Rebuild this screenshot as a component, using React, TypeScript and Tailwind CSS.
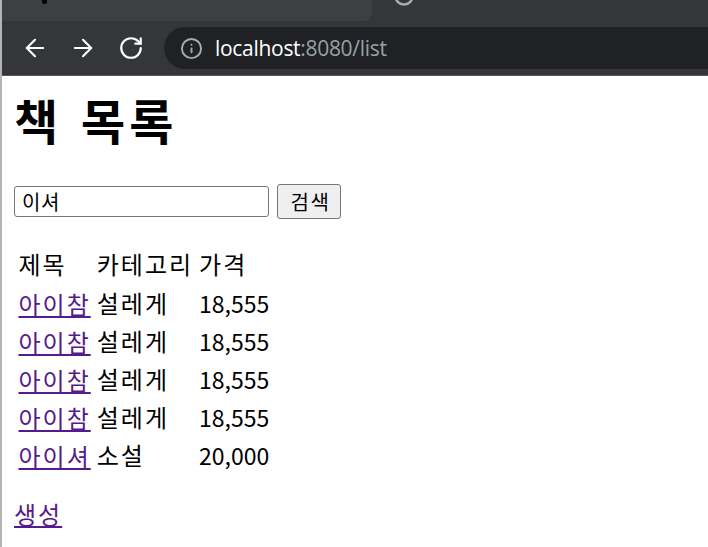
import { ArrowLeft, ArrowRight, Info, RotateCw } from "lucide-react";

const books = [
  { title: "아이참", category: "설레게", price: "18,555" },
  { title: "아이참", category: "설레게", price: "18,555" },
  { title: "아이참", category: "설레게", price: "18,555" },
  { title: "아이참", category: "설레게", price: "18,555" },
  { title: "아이셔", category: "소설", price: "20,000" },
];

function BrowserBar() {
  return (
    <div className="h-[76px] bg-[#35363a] border-b border-[#55565a] flex flex-col shrink-0">
      {/* Tab strip, cut off at the top */}
      <div className="h-[21px] flex items-start">
        <div className="w-[370px] h-[21px] bg-[#3c4043] rounded-br-lg pl-[40px]">
          <div className="w-[5px] h-[4px] bg-black rounded-b-full" />
        </div>
        <svg className="ml-[21px]" width="22" height="8" viewBox="0 0 22 8" fill="none">
          <circle cx="11" cy="-4" r="8.5" stroke="#a9abae" strokeWidth="2.5" />
        </svg>
      </div>
      {/* Toolbar */}
      <div className="flex-1 flex items-center pl-[9px]">
        <div className="w-12 flex justify-center">
          <ArrowLeft className="w-[28px] h-[28px] text-white" strokeWidth={1.8} />
        </div>
        <div className="w-12 flex justify-center">
          <ArrowRight className="w-[28px] h-[28px] text-white" strokeWidth={1.8} />
        </div>
        <div className="w-12 flex justify-center">
          <RotateCw className="w-[26px] h-[26px] text-white" strokeWidth={2} />
        </div>
        <div className="ml-[9px] flex-1 h-[42px] bg-[#202124] rounded-l-full flex items-center pl-[16px]">
          <Info className="w-[23px] h-[23px] text-[#a9abae]" strokeWidth={2} />
          <div className="ml-[12px] mt-[2px] text-[21px] font-['Open_Sans',sans-serif] tracking-[-0.3px]">
            <span className="text-white">localhost</span>
            <span className="text-[#9aa0a6]">:8080/list</span>
          </div>
        </div>
      </div>
    </div>
  );
}

export default function App() {
  return (
    <div className="h-[547px] w-[708px] overflow-hidden border-l-2 border-[#b4b4b0] bg-white flex flex-col">
      <BrowserBar />
      <div className="flex-1 pl-3 text-black text-[24px] tracking-[2px] font-['Noto_Sans_CJK_KR','Noto_Sans',sans-serif]">
        <h1 className="text-[48px] leading-[60px] font-bold mt-[13px] tracking-[4px] [word-spacing:4px]">책 목록</h1>

        <form className="flex items-center mt-[35px]">
          <input
            defaultValue="이셔"
            className="w-[255px] h-[31px] border border-[#767676] rounded-[3px] pl-[7px] pr-[5px] text-[20px] tracking-[0.5px] outline-none"
          />
          <button
            type="button"
            className="ml-2 w-[64px] h-[35px] bg-[#efefef] border border-[#767676] rounded-[3px] pl-[3px] text-[20px] tracking-[1.5px]"
          >
            검색
          </button>
        </form>

        <table className="mt-[23px] border-separate border-spacing-[3px]">
          <thead>
            <tr>
              <th className="font-normal text-left h-[35px] px-[1.5px] pt-[2px] leading-none">제목</th>
              <th className="font-normal text-left h-[35px] px-[1.5px] pt-[2px] leading-none">카테고리</th>
              <th className="font-normal text-left h-[35px] px-[1.5px] pt-[2px] leading-none">가격</th>
            </tr>
          </thead>
          <tbody>
            {books.map((book, i) => (
              <tr key={i}>
                <td className="h-[35px] px-[1.5px] pt-[6px] leading-none">
                  <a href="#" className="text-[#551a8b] underline">{book.title}</a>
                </td>
                <td className="h-[35px] px-[1.5px] pt-[4px] leading-none">{book.category}</td>
                <td className="h-[35px] px-[1.5px] pt-[6px] leading-none text-[23px] tracking-normal">{book.price}</td>
              </tr>
            ))}
          </tbody>
        </table>

        <a href="#" className="block w-fit mt-[29px] text-[#551a8b] underline leading-none">생성</a>
      </div>
    </div>
  );
}
